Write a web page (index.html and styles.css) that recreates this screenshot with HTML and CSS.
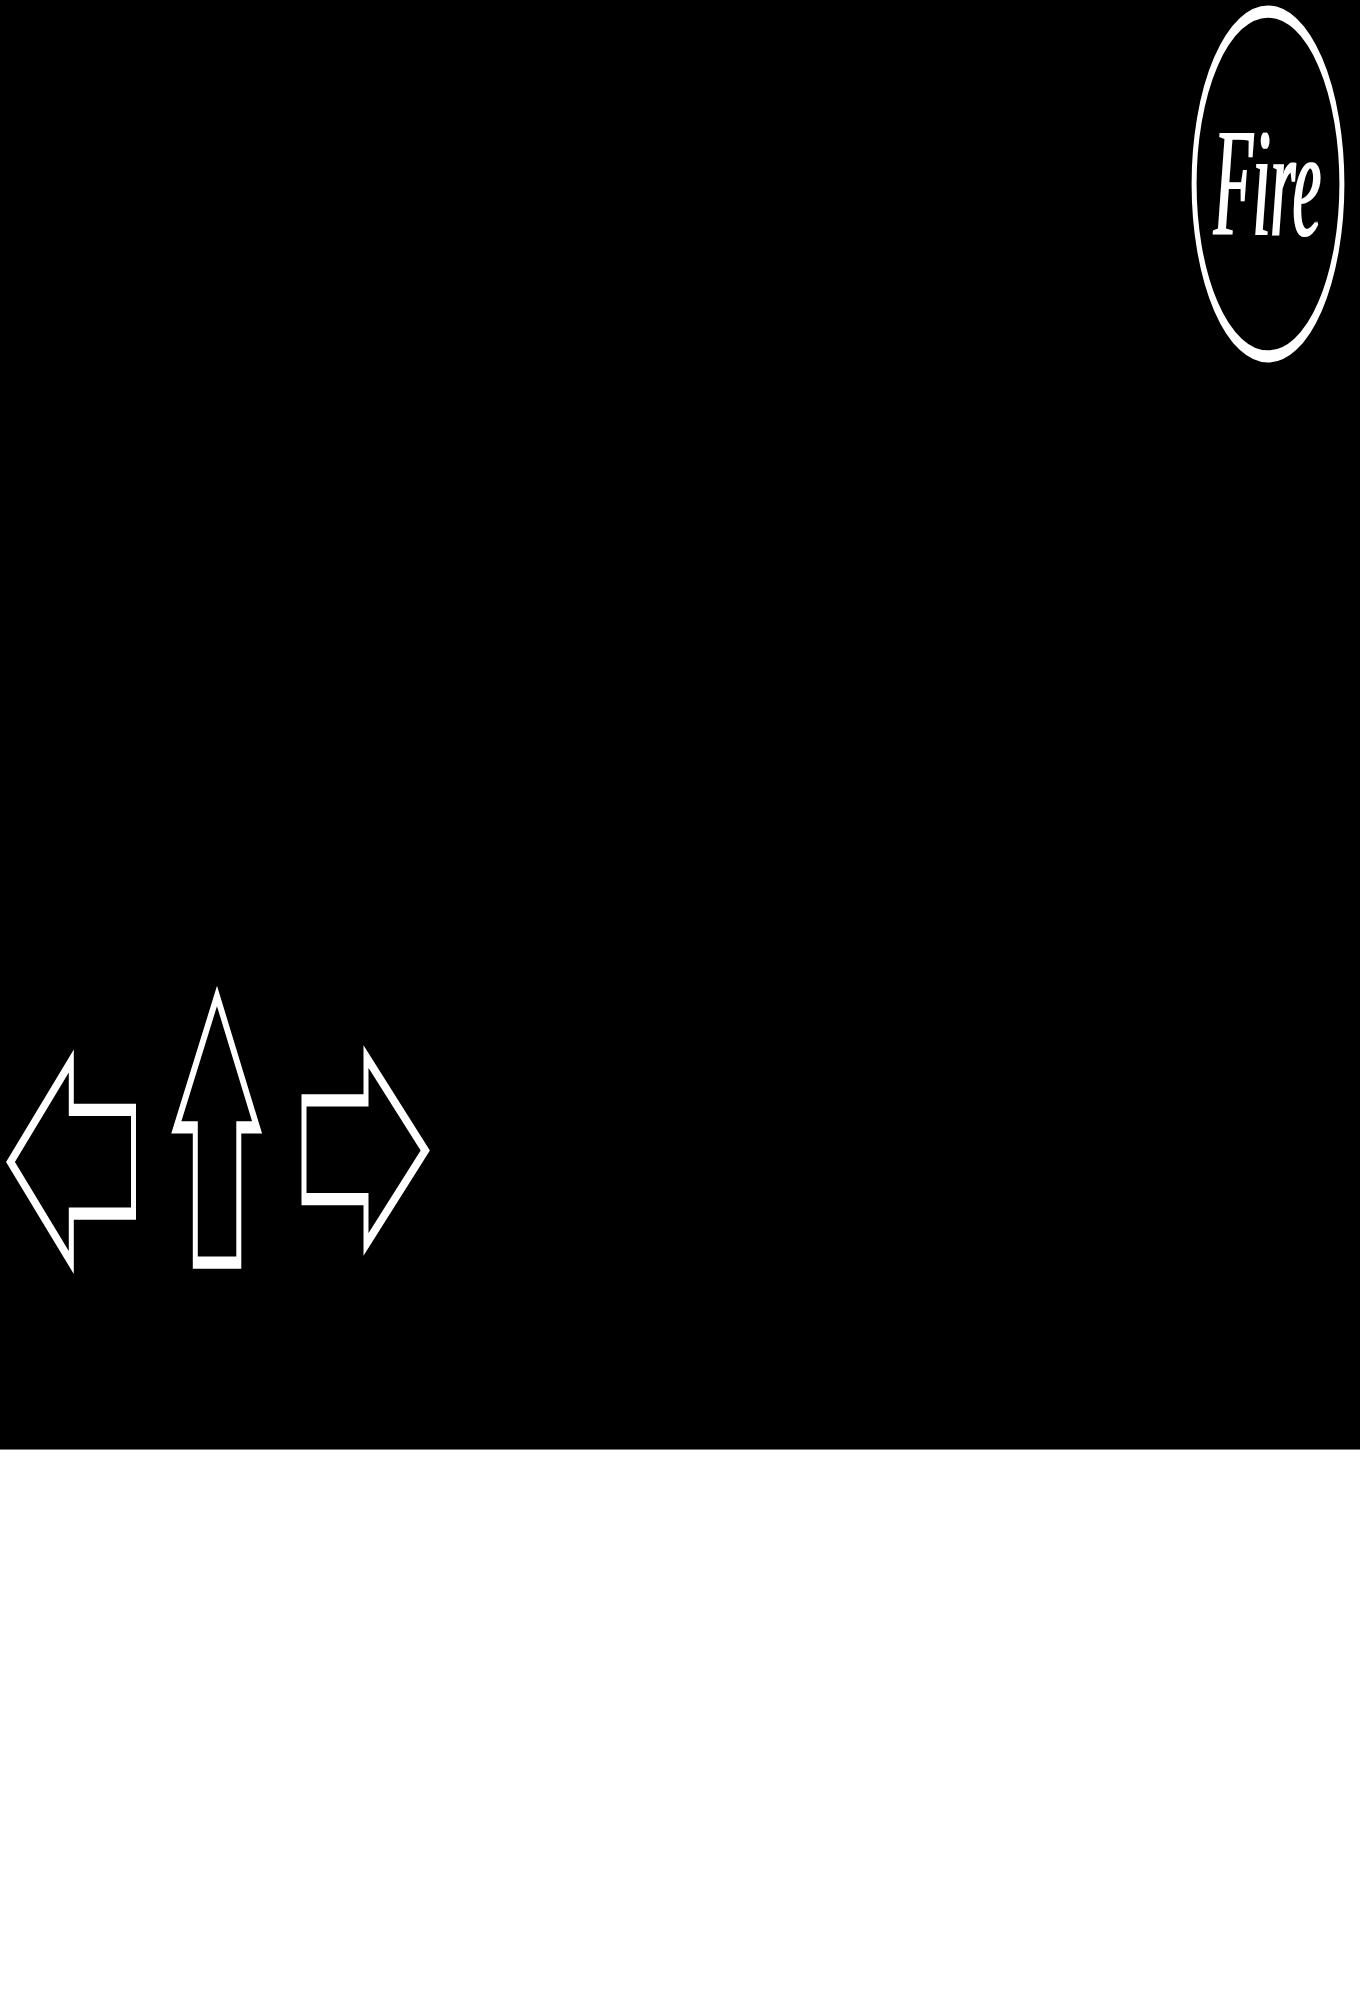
FILE: index.html
```html
<!DOCTYPE html>
<html lang="en">
<head>
<meta charset="utf-8">
<title>Game</title>
<link rel="stylesheet" href="styles.css">
</head>
<body>
<main class="game">
  <svg class="scene" width="1360" height="1449" viewBox="0 0 1360 1449" aria-label="Game controls">
    <defs>
      <filter id="thicken" x="-10%" y="-10%" width="120%" height="120%">
        <feMorphology operator="dilate" radius="0.7 0.15"/>
      </filter>
    </defs>
    <g transform="scale(1 2.45)">
      <g class="fire-button">
        <ellipse class="ring" cx="1268" cy="75.1" rx="73.9" ry="70.4"/>
        <text class="fire-label" x="1214" y="95.9" textLength="107" lengthAdjust="spacingAndGlyphs">Fire</text>
      </g>
      <g class="dpad">
        <polygon class="arrow" points="10.5,474.29 71.3,433.06 71.3,453.06 133.5,453.06 133.5,495.31 71.3,495.31 71.3,515.31"/>
        <polygon class="arrow" points="217,406.53 257.1,460.2 238.8,460.2 238.8,515.31 195.3,515.31 195.3,460.2 176.3,460.2"/>
        <polygon class="arrow" points="304,449.18 366,449.18 366,431.27 425.3,469.59 366,507.92 366,489.39 304,489.39"/>
      </g>
    </g>
  </svg>
</main>
</body>
</html>
```
FILE: styles.css
```css
html, body {
  margin: 0;
  padding: 0;
  background: #ffffff;
}

.game {
  width: 1360px;
  height: 1449px;
  background: #000000;
  border-bottom: 1px solid #7a7a7a;
  box-shadow: 0 1px 0 #e6e6e6;
}

.scene {
  display: block;
}

.ring,
.arrow {
  fill: none;
  stroke: #ffffff;
  stroke-width: 5;
  stroke-linejoin: miter;
  stroke-miterlimit: 10;
}

.fire-label {
  fill: #ffffff;
  font-family: "Liberation Serif", "Times New Roman", serif;
  font-style: italic;
  font-weight: 400;
  font-size: 63px;
  filter: url(#thicken);
}
```
